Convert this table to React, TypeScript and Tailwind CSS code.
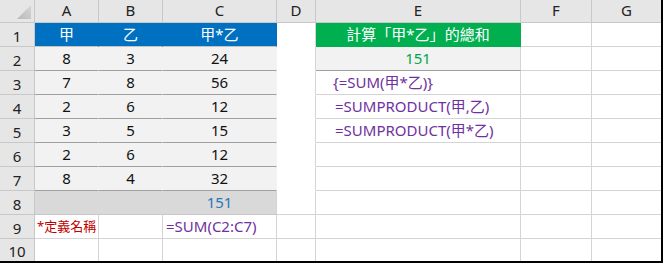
import React from "react";

type Cell = { text?: string; cls: string; txt?: string };

const FONT = { fontFamily: '"Noto Sans", "Noto Sans CJK TC", sans-serif' };

const grid = "border-r border-b border-[#d4d4d4] bg-white";
const gridLast = "border-b border-[#d4d4d4] bg-white";
const body = "border-r border-b border-[#f2f2f2] border-b-[#a0a0a0] bg-[#f2f2f2] justify-center text-[#111]";
const blue = "border-r border-b border-[#0070c0] border-b-[#c4c4c4] bg-[#0070c0] justify-center text-white";
const dWhite = "border-r border-b border-white border-r-[#d4d4d4] bg-white";
const purple = "border-r border-b border-[#d4d4d4] bg-white text-[#7030a0]";

const rowHead = "border-r border-b border-[#c8c8c8] bg-[#e6e6e6] justify-center pt-1 text-[#222]";
const colHead = "border-r border-b border-[#c8c8c8] bg-[#e6e6e6] justify-center pb-0.5 text-[#222]";

const rows: Cell[][] = [
  [
    { text: "甲", cls: blue },
    { text: "乙", cls: blue },
    { text: "甲*乙", cls: blue },
    { cls: dWhite },
    { text: "計算「甲*乙」的總和", cls: "border-r border-b border-[#00b050] bg-[#00b050] justify-center text-white" },
    { cls: grid },
    { cls: gridLast },
  ],
  [
    { text: "8", cls: body },
    { text: "3", cls: body },
    { text: "24", cls: body },
    { cls: dWhite },
    { text: "151", cls: "border-r border-b border-[#f2f2f2] border-b-[#a0a0a0] border-r-[#d4d4d4] bg-[#f2f2f2] justify-center text-[#00a84a]" },
    { cls: grid },
    { cls: gridLast },
  ],
  [
    { text: "7", cls: body },
    { text: "8", cls: body },
    { text: "56", cls: body },
    { cls: dWhite },
    { text: "{=SUM(甲*乙)}", cls: purple + " pl-[17px]" },
    { cls: grid },
    { cls: gridLast },
  ],
  [
    { text: "2", cls: body },
    { text: "6", cls: body },
    { text: "12", cls: body },
    { cls: dWhite },
    { text: "=SUMPRODUCT(甲,乙)", cls: purple + " pl-[19px]" },
    { cls: grid },
    { cls: gridLast },
  ],
  [
    { text: "3", cls: body },
    { text: "5", cls: body },
    { text: "15", cls: body },
    { cls: dWhite },
    { text: "=SUMPRODUCT(甲*乙)", cls: purple + " pl-[19px]" },
    { cls: grid },
    { cls: gridLast },
  ],
  [
    { text: "2", cls: body },
    { text: "6", cls: body },
    { text: "12", cls: body },
    { cls: dWhite },
    { cls: grid },
    { cls: grid },
    { cls: gridLast },
  ],
  [
    { text: "8", cls: body },
    { text: "4", cls: body },
    { text: "32", cls: body },
    { cls: dWhite },
    { cls: grid },
    { cls: grid },
    { cls: gridLast },
  ],
  [
    { cls: "border-r border-b border-[#d9d9d9] border-b-[#c8c8c8] bg-[#d9d9d9]" },
    { cls: "border-r border-b border-[#d9d9d9] border-b-[#c8c8c8] bg-[#d9d9d9]" },
    { text: "151", cls: "border-r border-b border-[#d9d9d9] border-b-[#c8c8c8] border-r-[#d4d4d4] bg-[#d9d9d9] justify-center text-[#2e75b6]" },
    { cls: "border-r border-b border-[#d4d4d4] bg-white" },
    { cls: grid },
    { cls: grid },
    { cls: gridLast },
  ],
  [
    { text: "*定義名稱", cls: grid + " pl-[2px] text-[13px] text-[#c00000]" },
    { cls: grid },
    { text: "=SUM(C2:C7)", cls: purple + " pl-[3px]" },
    { cls: grid },
    { cls: grid },
    { cls: grid },
    { cls: gridLast },
  ],
  [
    { cls: "border-r border-[#d4d4d4] bg-white" },
    { cls: "border-r border-[#d4d4d4] bg-white" },
    { cls: "border-r border-[#d4d4d4] bg-white" },
    { cls: "border-r border-[#d4d4d4] bg-white" },
    { cls: "border-r border-[#d4d4d4] bg-white" },
    { cls: "border-r border-[#d4d4d4] bg-white" },
    { cls: "bg-white" },
  ],
];

const columns = ["A", "B", "C", "D", "E", "F", "G"];

export default function App() {
  return (
    <div className="bg-white" style={FONT}>
      <div className="grid w-[663px] grid-cols-[35px_64px_64px_114px_39px_205px_71px_69px] grid-rows-[23px_repeat(9,24px)_22px] border-r-2 border-b-2 border-black text-[15px] leading-none">
        {/* corner select-all cell */}
        <div className="relative border-r border-b border-[#c8c8c8] bg-[#e6e6e6]">
          <svg className="absolute left-0 top-0" width="34" height="22" viewBox="0 0 34 22">
            <defs>
              <linearGradient id="corner" x1="0" y1="1" x2="1" y2="0">
                <stop offset="0" stopColor="#b9b9b9" />
                <stop offset="1" stopColor="#d6d6d6" />
              </linearGradient>
            </defs>
            <polygon points="17,19 31,5 31,19" fill="url(#corner)" />
          </svg>
        </div>
        {columns.map((c, i) => (
          <div
            key={c}
            className={
              i === columns.length - 1
                ? "flex items-center justify-center border-b border-[#c8c8c8] bg-[#e6e6e6] pb-0.5 text-[#222]"
                : "flex items-center " + colHead
            }
          >
            {c}
          </div>
        ))}
        {rows.map((r, ri) => (
          <React.Fragment key={ri}>
            <div className={"flex items-center " + (ri === rows.length - 1 ? "border-r border-[#c8c8c8] bg-[#e6e6e6] justify-center pt-0.5 text-[#222]" : rowHead)}>
              {ri + 1}
            </div>
            {r.map((cell, ci) => (
              <div key={ci} className={"flex items-center whitespace-nowrap overflow-visible " + cell.cls}>
                {cell.text}
              </div>
            ))}
          </React.Fragment>
        ))}
      </div>
    </div>
  );
}
